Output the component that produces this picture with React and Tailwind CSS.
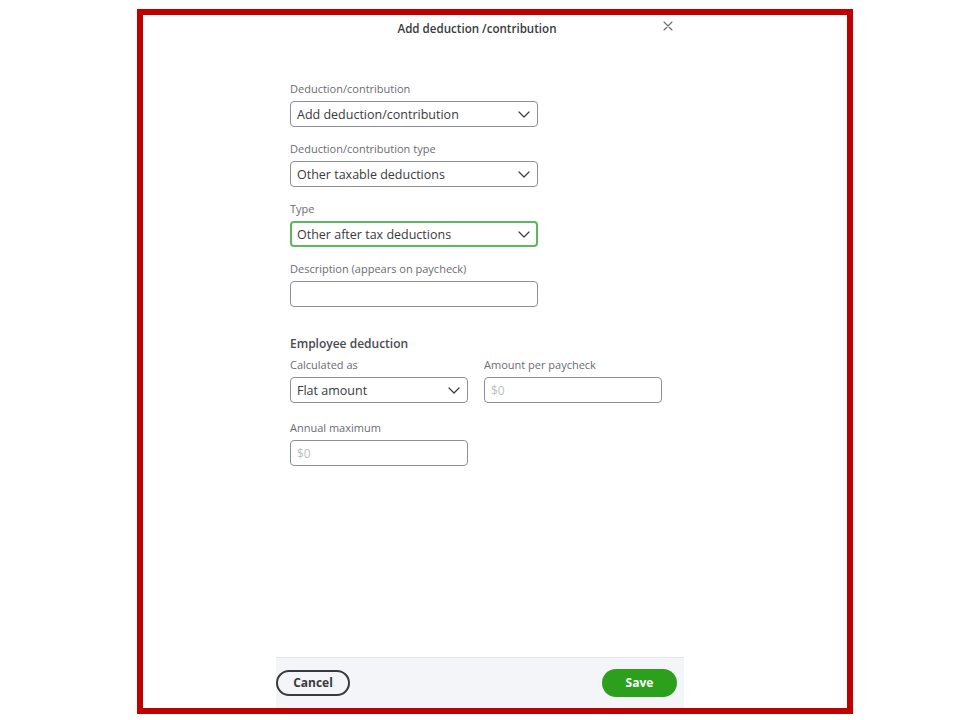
import React from "react";

const font = { fontFamily: '"Open Sans", "Liberation Sans", sans-serif' };

const Chevron = () => (
  <svg width="12" height="7" viewBox="0 0 12 7" fill="none" className="shrink-0">
    <path d="M1 1l5 5 5-5" stroke="#393a3d" strokeWidth="1.2" strokeLinecap="round" strokeLinejoin="round" />
  </svg>
);

const Label = ({ children }) => (
  <div className="h-[16px] mb-[4px] text-[11px] leading-[16px] text-[#6b6c72]">{children}</div>
);

const Select = ({ value, focused }) => (
  <div
    className={`h-[26px] flex items-center justify-between rounded-[4px] bg-white ${
      focused ? "border-2 border-[#5cb85c] pl-[5px] pr-[6px]" : "border border-[#8d9096] pl-[6px] pr-[7px]"
    }`}
  >
    <span className="pt-[2px] text-[12.5px] text-[#393a3d] leading-none">{value}</span>
    <Chevron />
  </div>
);

const Input = ({ placeholder }) => (
  <div className="h-[26px] flex items-center pl-[6px] rounded-[4px] border border-[#8d9096] bg-white">
    <span className="pt-[2px] text-[12px] text-[#babec5] leading-none">{placeholder}</span>
  </div>
);

export default function App() {
  return (
    <div className="w-[960px] h-[720px] bg-white pt-[9px]" style={font}>
      <div className="ml-[137px] w-[716px] h-[705px] border-[6px] border-[#c00000] flex">
        <div className="ml-[133px] w-[408px] h-full flex flex-col">
          {/* Header */}
          <div className="relative pt-[6px] h-[66px]">
            <div className="text-center text-[11.6px] leading-[16px] font-semibold text-[#393a3d] pr-[6px]">
              Add deduction /contribution
            </div>
            <svg
              className="absolute right-[11px] top-[6px]"
              width="10"
              height="10"
              viewBox="0 0 10 10"
              fill="none"
            >
              <path d="M1 1l8 8M9 1l-8 8" stroke="#6b6c72" strokeWidth="1.1" strokeLinecap="round" />
            </svg>
          </div>

          {/* Body */}
          <div className="flex-1 pl-[14px]">
            <div className="w-[248px] flex flex-col gap-[14px]">
              <div>
                <Label>Deduction/contribution</Label>
                <Select value="Add deduction/contribution" />
              </div>
              <div>
                <Label>Deduction/contribution type</Label>
                <Select value="Other taxable deductions" />
              </div>
              <div>
                <Label>Type</Label>
                <Select value="Other after tax deductions" focused />
              </div>
              <div>
                <Label>Description (appears on paycheck)</Label>
                <Input placeholder="" />
              </div>
            </div>

            <div className="mt-[29px] text-[12px] leading-[16px] font-semibold text-[#4a4b50]">
              Employee deduction
            </div>

            <div className="mt-[5px] grid grid-cols-[178px_178px] gap-x-[16px] gap-y-[17px]">
              <div>
                <Label>Calculated as</Label>
                <Select value="Flat amount" />
              </div>
              <div>
                <Label>Amount per paycheck</Label>
                <Input placeholder="$0" />
              </div>
              <div>
                <Label>Annual maximum</Label>
                <Input placeholder="$0" />
              </div>
            </div>
          </div>

          {/* Footer */}
          <div className="h-[51px] shrink-0 bg-[#f4f5f8] border-t border-[#e3e5e8] flex items-center justify-between pr-[7px]">
            <button className="w-[74px] h-[26px] rounded-full border-2 border-[#393a3d] bg-transparent text-[12px] font-bold text-[#393a3d]">
              Cancel
            </button>
            <button className="w-[75px] h-[28px] rounded-full bg-[#2ca01c] text-[12px] font-bold text-white">
              Save
            </button>
          </div>
        </div>
      </div>
    </div>
  );
}
